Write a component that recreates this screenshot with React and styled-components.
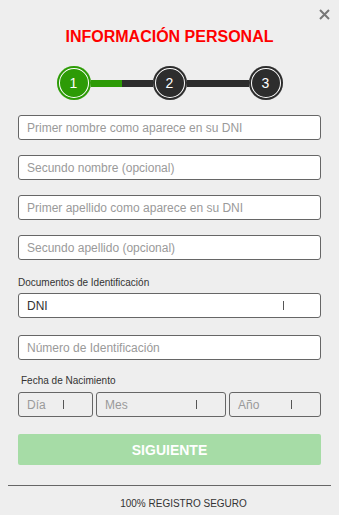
import React from "react";
import styled, { createGlobalStyle } from "styled-components";

const GlobalStyle = createGlobalStyle`
  body {
    margin: 0;
    background: #eeeeee;
    font-family: "Liberation Sans", Arial, sans-serif;
  }
`;

const App = () => {
  return (
    <Page>
      <GlobalStyle />
      <Close aria-label="cerrar">
        <svg width="11" height="11" viewBox="0 0 11 11">
          <path d="M1 1 L10 10 M10 1 L1 10" stroke="#777" strokeWidth="2" />
        </svg>
      </Close>
      <Title>INFORMACIÓN PERSONAL</Title>
      <Stepper>
        <Step active>1</Step>
        <Connector half />
        <Step>2</Step>
        <Connector />
        <Step>3</Step>
      </Stepper>
      <Form>
        <Input placeholder="Primer nombre como aparece en su DNI" />
        <Input placeholder="Secundo nombre (opcional)" />
        <Input placeholder="Primer apellido como aparece en su DNI" />
        <Input placeholder="Secundo apellido (opcional)" />
        <Label>Documentos de Identificación</Label>
        <Select>
          <SelectText>DNI</SelectText>
          <Bar />
        </Select>
        <Input placeholder="Número de Identificación" spaced />
        <Label indent>Fecha de Nacimiento</Label>
        <DateRow>
          <DateBox>
            <SelectText muted>Día</SelectText>
            <Bar />
          </DateBox>
          <DateBox>
            <SelectText muted>Mes</SelectText>
            <Bar />
          </DateBox>
          <DateBox>
            <SelectText muted>Año</SelectText>
            <Bar />
          </DateBox>
        </DateRow>
        <Button>SIGUIENTE</Button>
      </Form>
      <Rule />
      <Footer>100% REGISTRO SEGURO</Footer>
    </Page>
  );
};

export default App;

const Page = styled.div`
  position: relative;
  width: 339px;
  height: 515px;
  box-sizing: border-box;
  padding-top: 28px;
  background: #eeeeee;
`;

const Close = styled.div`
  position: absolute;
  top: 9px;
  right: 9px;
  width: 11px;
  height: 11px;
  display: flex;
`;

const Title = styled.h1`
  margin: 0;
  text-align: center;
  color: #ff0000;
  font-size: 16px;
  line-height: 18px;
  font-weight: bold;
`;

const Stepper = styled.div`
  display: flex;
  align-items: center;
  width: 226px;
  margin: 20px auto 0;
`;

const Step = styled.div`
  width: 34px;
  height: 34px;
  flex: none;
  border-radius: 50%;
  background: ${({ active }) => (active ? "#2d9b06" : "#2d2d2d")};
  box-shadow: inset 0 0 0 2px ${({ active }) => (active ? "#2d9b06" : "#2d2d2d")},
    inset 0 0 0 3px #ffffff;
  color: #ffffff;
  font-size: 14px;
  display: flex;
  align-items: center;
  justify-content: center;
`;

const Connector = styled.div`
  flex: 1;
  height: 7px;
  background: ${({ half }) =>
    half ? "linear-gradient(to right, #2d9b06 50%, #2d2d2d 50%)" : "#2d2d2d"};
`;

const Form = styled.div`
  display: flex;
  flex-direction: column;
  padding: 15px 18px 0;
`;

const Input = styled.input`
  height: 25px;
  box-sizing: border-box;
  border: 1px solid #666;
  border-radius: 3px;
  background: #ffffff;
  padding: 0 8px;
  margin: ${({ spaced }) => (spaced ? "17px 0 0" : "0 0 15px")};
  font-family: "Liberation Sans", Arial, sans-serif;
  font-size: 12px;
  color: #333;
  outline: none;
  &::placeholder {
    color: #9a9a9a;
  }
`;

const Label = styled.div`
  font-size: 10px;
  line-height: 12px;
  color: #333;
  margin: ${({ indent }) => (indent ? "15px 0 5px 3px" : "2px 0 4px")};
`;

const Select = styled.div`
  height: 25px;
  box-sizing: border-box;
  border: 1px solid #666;
  border-radius: 3px;
  background: #ffffff;
  display: flex;
  align-items: center;
  padding: 0 36px 0 8px;
`;

const SelectText = styled.span`
  flex: 1;
  font-size: 12px;
  color: ${({ muted }) => (muted ? "#9a9a9a" : "#333")};
`;

const Bar = styled.span`
  width: 1px;
  height: 9px;
  background: #555;
`;

const DateRow = styled.div`
  display: grid;
  grid-template-columns: 75px 130px 1fr;
  gap: 3px;
`;

const DateBox = styled.div`
  height: 25px;
  box-sizing: border-box;
  border: 1px solid #666;
  border-radius: 3px;
  background: #eeeeee;
  display: flex;
  align-items: center;
  padding: 0 28px 0 8px;
`;

const Button = styled.button`
  margin-top: 17px;
  height: 31px;
  border: none;
  border-radius: 2px;
  background: #a6dca6;
  color: #ffffff;
  font-family: "Liberation Sans", Arial, sans-serif;
  font-weight: bold;
  font-size: 14px;
`;

const Rule = styled.div`
  margin: 20px 8px 0;
  height: 1px;
  background: #666;
`;

const Footer = styled.div`
  margin-top: 12px;
  padding-left: 28px;
  text-align: center;
  font-size: 10px;
  color: #333;
`;
